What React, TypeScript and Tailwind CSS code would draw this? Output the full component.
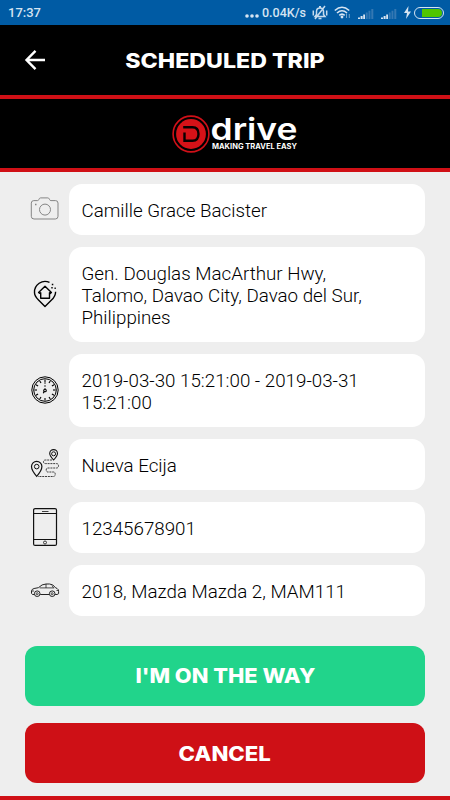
import type { ReactNode } from 'react';

function CameraIcon() {
  return (
    <svg width="30" height="30" viewBox="0 0 30 30" fill="none" stroke="#858585" strokeWidth="1">
      <path d="M3.8 6.6h3.7q1 0 1.3-1l.4-.8q.4-.9 1.4-.9h7.2q1 0 1.4.9l.4.8q.3 1 1.3 1h4.6q2.5 0 2.5 2.5v13.2q0 2.7-2.7 2.7H4Q1.3 25 1.3 22.3V9.1Q1.3 6.600 3.8 6.6z" />
      <circle cx="15" cy="15.6" r="5.5" />
      <path d="M5 10.500h1.500" strokeWidth="1.4" />
    </svg>
  );
}

function HomePinIcon() {
  return (
    <svg width="30" height="30" viewBox="0 0 30 30" fill="none" stroke="#000" strokeWidth="1.4" strokeLinejoin="round">
      <path d="M19.5 3.4A10.600 10.600 0 0 0 4.500 13.500q0 3.500 4 7.500l6.500 6.600 6.500-6.600Q25.600 17.400 25.600 12.800" />
      <path d="M8.600 13.400 15 7.300l6.400 6.100-1.100 1-.8-.7v5.600h-8.800v-5.600l-.9.7z" />
      <path d="M21.800 5.500h1.500M21.300 8.800h1.400M24.500 9.300h1.300" strokeWidth="1.5" />
    </svg>
  );
}

function ClockIcon() {
  return (
    <svg width="30" height="30" viewBox="0 0 30 30" fill="none" stroke="#000">
      <circle cx="15" cy="15" r="13.2" />
      <circle cx="15" cy="15" r="11.3" />
      {[0, 30, 60, 90, 120, 150, 180, 210, 240, 270, 300, 330].map((angle) => (
        <path key={angle} d="M15 4.500v2.500" strokeWidth="1.1" transform={`rotate(${angle} 15 15)`} />
      ))}
      <path d="M15 7v7" strokeWidth=".8" strokeDasharray="2 1" />
      <circle cx="15" cy="15.5" r="1.3" strokeWidth="1.1" />
      <path d="m14.200 16.500-.9 1.800" strokeWidth="1.2" />
    </svg>
  );
}

function RouteIcon() {
  return (
    <svg width="30" height="30" viewBox="0 0 30 30" fill="none" stroke="#111">
      <path d="M6.700 27.300Q1.500 21.400 1.500 17.500a5.200 5.200 0 0 1 10.400 0q0 3.900-5.200 9.800z" strokeWidth="1.2" />
      <circle cx="6.7" cy="17.6" r="2.3" />
      <path d="M23.600 11q-3.900-4.200-3.900-6.500a3.900 3.900 0 0 1 7.800 0q0 2.300-3.900 6.500z" strokeWidth="1.1" />
      <circle cx="23.6" cy="4.8" r="2" />
      <path d="M22 11h-6.500q-2 0-2 1.800t2 1.800h11q2 0 2 2.200t-2 2.200h-8.500q-1.800 0-1.800 2t1.800 2h5.500q1.700 0 1.700 2.200t-1.700 2.300H8" strokeWidth=".8" strokeDasharray="2 .8" />
    </svg>
  );
}

function PhoneIcon() {
  return (
    <svg width="30" height="40" viewBox="0 0 30 40" fill="none" stroke="#111" strokeWidth="1.2">
      <rect x="3.6" y="1.6" width="22.9" height="36.8" rx="1.5" />
      <path d="M3.600 6.500h22.900M3.600 32.500h22.900" strokeWidth="1" />
      <path d="M12 4.500h6.500" strokeWidth=".8" />
      <circle cx="15" cy="35.5" r="1.5" strokeWidth=".8" />
    </svg>
  );
}

function CarIcon() {
  return (
    <svg width="30" height="16" viewBox="0 0 30 16" fill="none" stroke="#222">
      <path d="M4.300 12.500H2.500l-1-1.200V8.900q.2-1.800 2.600-2.400L8.400 5.700Q12 2 16 2h3.500q3.500 0 6 3.700l1.600.8q1.600.8 1.500 3.200v2l-1.500.8h-2M10.200 12.500h9" />
      <circle cx="7.2" cy="11.7" r="2.8" />
      <circle cx="22.2" cy="11.7" r="2.8" />
      <circle cx="7.2" cy="11.7" r="1" strokeWidth=".8" />
      <circle cx="22.2" cy="11.7" r="1" strokeWidth=".8" />
      <path d="M9.700 5.900h14.500M16 2v4M22 3.500l1.500 2.400M2 9h2M26.500 8.500h2" strokeWidth=".8" />
    </svg>
  );
}

function SignalIcon() {
  return (
    <svg className="mt-[2px]" width="16" height="12" viewBox="0 0 16 12">
      <path d="M0 9.500h2V11H0zM2.600 8h2v3h-2zM5.200 6.500h1.800V11H5.200z" fill="#d7e4f1" />
      <path d="M7.800 4.500h1.900V11H7.800zM10.500 2.800h1.900V11h-1.900zM13.300 1h2v10h-2z" fill="#3478b3" />
    </svg>
  );
}

function StatusBar() {
  return (
    <div className="flex h-[25px] items-center justify-between bg-[#005ba4] pr-[6px] pl-2 text-[12.5px] font-medium text-[#d5e4f2]">
      <span className="text-[13px]">17:37</span>
      <div className="flex items-center">
        <svg className="mr-[3.5px]" width="14" height="14" viewBox="0 0 14 14" fill="#d5e4f2">
          <circle cx="2" cy="10" r="1.8" />
          <circle cx="7" cy="10" r="1.8" />
          <circle cx="12" cy="10" r="1.8" />
        </svg>
        <span className="w-[44px] pt-px whitespace-nowrap">0.04K/s</span>
        <svg className="ml-[6px]" width="16" height="16" viewBox="0 0 16 16" fill="none" stroke="#c5dbed" strokeWidth="1.5">
          <path d="M3 11.500h10l-1.500-2V6.500Q11.500 3 8 3T4.500 6.500v3zM6.500 13.500h3M13 1 3 14M7 1.700h2" />
          <path d="M1.300 5.500v5M14.700 5.500v5" />
        </svg>
        <svg className="ml-[6px]" width="17" height="15" viewBox="0 0 17 15" fill="none" stroke="#d5e4f2" strokeWidth="1.6">
          <path d="M.8 5.500q7.200-6.500 14.400 0M3 8q5-4.500 10 0M5.300 10.400q2.700-2.500 5.400 0" />
          <circle cx="8" cy="12" r="1.4" fill="#d5e4f2" stroke="none" />
          <path d="M12.500 8.500V13M15.300 9v4" strokeWidth=".9" stroke="#7eabd0" />
        </svg>
        <span className="ml-[7px]"><SignalIcon /></span>
        <span className="ml-[7px]"><SignalIcon /></span>
        <svg className="ml-[6px]" width="9" height="13" viewBox="0 0 9 13" fill="#d5e4f2">
          <path d="M5.500 0 1 7h3L3 13l5-7.500H5z" />
        </svg>
        <div className="ml-[2px] flex h-[12px] w-[30px] items-center justify-end rounded-full border border-[#d5e4f2] p-px">
          <div className="h-[8px] w-[20px] rounded-r-full bg-[#4fc400]" />
        </div>
      </div>
    </div>
  );
}

function Logo() {
  return (
    <svg width="126" height="56" viewBox="172 106 126 56">
      <circle cx="191" cy="134" r="17.9" fill="none" stroke="#d01018" strokeWidth="1.6" />
      <circle cx="191" cy="134" r="14.9" fill="#d61218" />
      <path d="M183.200 127.300h9.300q6 0 6 6.700t-6 6.700h-8v-8.200" fill="none" stroke="#080000" strokeWidth="2.4" />
      <text x="210.500" y="140" textLength="87" lengthAdjust="spacingAndGlyphs" fill="#fff" className="font-[Inter] text-[30px] font-semibold">drive</text>
      <text x="212" y="149.400" textLength="85" lengthAdjust="spacingAndGlyphs" fill="#fff" className="font-[Inter] text-[7px] font-bold">MAKING TRAVEL EASY</text>
    </svg>
  );
}

function DetailRow({ icon, children }: { icon: ReactNode; children: ReactNode }) {
  return (
    <div className="flex items-center">
      <div className="flex w-[30px] shrink-0 justify-center">{icon}</div>
      <div className="ml-[9px] flex-1 rounded-[13px] bg-white pt-[15.5px] pr-9 pb-[13px] pl-[12.5px] text-[18.75px] leading-[22px] font-light text-black">
        {children}
      </div>
    </div>
  );
}

export default function App() {
  return (
    <div className="flex h-[800px] w-[450px] flex-col overflow-hidden bg-[#eeeeee] font-[Roboto,sans-serif]">
      <StatusBar />
      <header className="grid h-[70px] grid-cols-[60px_1fr_60px] items-center bg-black text-white">
        <button className="pl-6" aria-label="Back">
          <svg width="22" height="22" viewBox="0 0 22 22" fill="none" stroke="#fff" strokeWidth="2.4">
            <path d="M21 11H2.500M11.500 1.800 2.500 11l9 9.200" />
          </svg>
        </button>
        <h1 className="scale-x-[1.13] pt-[2px] text-center font-[Inter] text-[20.5px] font-extrabold whitespace-nowrap">SCHEDULED TRIP</h1>
      </header>
      <div className="flex h-[77px] items-center justify-center border-y-4 border-[#d01016] bg-black pl-5">
        <Logo />
      </div>

      <main className="flex flex-col gap-[12.5px] pt-3 pr-[25px] pl-[30px]">
        <DetailRow icon={<CameraIcon />}>Camille Grace Bacister</DetailRow>
        <DetailRow icon={<HomePinIcon />}>
          Gen. Douglas MacArthur Hwy,
          <br />
          Talomo, Davao City, Davao del Sur,
          <br />
          Philippines
        </DetailRow>
        <DetailRow icon={<ClockIcon />}>
          2019-03-30 15:21:00 - 2019-03-31
          <br />
          15:21:00
        </DetailRow>
        <DetailRow icon={<RouteIcon />}>Nueva Ecija</DetailRow>
        <DetailRow icon={<PhoneIcon />}>12345678901</DetailRow>
        <DetailRow icon={<CarIcon />}>2018, Mazda Mazda 2, MAM111</DetailRow>
      </main>

      <div className="mt-[30px] flex flex-col gap-[17.5px] px-[25px] font-[Inter] text-[20.5px] font-extrabold text-white">
        <button className="h-[60px] rounded-[12px] bg-[#21d48b]">
          <span className="inline-block scale-x-[1.065] pt-[2px]">I'M ON THE WAY</span>
        </button>
        <button className="h-[60px] rounded-[12px] bg-[#ce1016]">
          <span className="inline-block scale-x-[1.08] pt-[2px]">CANCEL</span>
        </button>
      </div>
      <div className="mt-auto h-[4px] shrink-0 bg-[#d01016]" />
    </div>
  );
}
